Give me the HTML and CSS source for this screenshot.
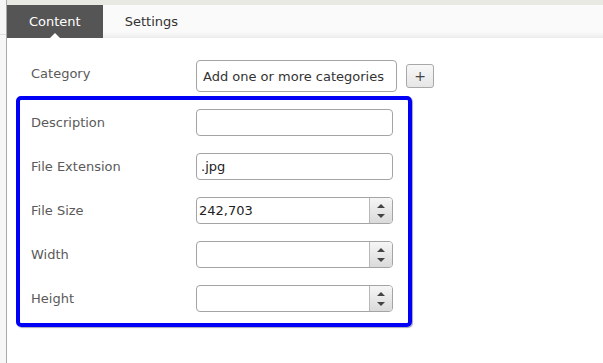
FILE: index.html
```html
<!DOCTYPE html>
<html lang="en">
<head>
    <meta charset="UTF-8">
    <meta name="viewport" content="width=device-width, initial-scale=1.0">
    <title>Media Properties</title>
    <link rel="stylesheet" href="styles.css">
</head>
<body>
    <div class="page">
        <aside class="rail">
            <div class="rail-line"></div>
        </aside>

        <main class="panel">
            <div class="top-stripe"></div>

            <nav class="tabs">
                <a class="tab active" href="#">Content</a>
                <a class="tab" href="#">Settings</a>
            </nav>

            <form class="form">
                <div class="row category-row">
                    <label class="label">Category</label>
                    <div class="field-group">
                        <input class="input category-input" type="text" placeholder="Add one or more categories">
                        <button class="add-btn" type="button">+</button>
                    </div>
                </div>

                <div class="highlight">
                    <div class="row">
                        <label class="label">Description</label>
                        <input class="input" type="text">
                    </div>
                    <div class="row">
                        <label class="label">File Extension</label>
                        <input class="input" type="text" value=".jpg">
                    </div>
                    <div class="row">
                        <label class="label">File Size</label>
                        <div class="input spin">
                            <input type="text" value="242,703">
                            <span class="spinner"><i class="up"></i><i class="down"></i></span>
                        </div>
                    </div>
                    <div class="row">
                        <label class="label">Width</label>
                        <div class="input spin">
                            <input type="text">
                            <span class="spinner"><i class="up"></i><i class="down"></i></span>
                        </div>
                    </div>
                    <div class="row">
                        <label class="label">Height</label>
                        <div class="input spin">
                            <input type="text">
                            <span class="spinner"><i class="up"></i><i class="down"></i></span>
                        </div>
                    </div>
                </div>
            </form>
        </main>
    </div>
</body>
</html>
```

FILE: styles.css
```css
* {
    margin: 0;
    padding: 0;
    box-sizing: border-box;
}

body {
    font-family: "DejaVu Sans", Verdana, sans-serif;
    font-size: 13px;
    color: #333;
    background: #fff;
}

.page {
    display: flex;
    min-height: 363px;
}

/* left strip */
.rail {
    width: 7px;
    flex-shrink: 0;
    background: #f6f6f6;
    border-right: 1px solid #a9a9a9;
}

.rail-line {
    margin-top: 34px;
    border-top: 1px solid #dedede;
}

.panel {
    flex: 1;
    display: flex;
    flex-direction: column;
}

.top-stripe {
    height: 5px;
    background: #e9e9e3;
}

/* tabs */
.tabs {
    display: flex;
    height: 33px;
    background: linear-gradient(to bottom, #fafafa 0, #fafafa 27px, #ececec 33px);
}

.tab {
    position: relative;
    display: flex;
    align-items: center;
    padding: 0 22px;
    color: #333;
    text-decoration: none;
}

.tab.active {
    background: #555;
    color: #fff;
}

.tab.active::after {
    content: '';
    position: absolute;
    left: 50%;
    bottom: 0;
    margin-left: -5px;
    border-left: 5px solid transparent;
    border-right: 5px solid transparent;
    border-bottom: 5px solid #fff;
}

/* form */
.form {
    padding: 22px 0 0 9px;
}

.row {
    display: grid;
    grid-template-columns: 165px auto;
    align-items: center;
    justify-content: start;
}

.label {
    color: #5a5a5a;
}

.category-row {
    padding-left: 15px;
    height: 32px;
}

.category-row .label {
    margin-top: -6px;
}

.field-group {
    display: flex;
    align-items: center;
    gap: 9px;
}

.input {
    width: 197px;
    height: 27px;
    border: 1px solid #a4a4a4;
    border-radius: 4px;
    background: #fff;
    font: inherit;
    color: #222;
    padding: 0 4px;
    outline: none;
}

.category-input {
    width: 201px;
    height: 32px;
    padding: 0 6px;
}

.category-input::placeholder {
    color: #333;
}

.add-btn {
    width: 28px;
    height: 24px;
    border: 1px solid #a8a8a8;
    border-radius: 3px;
    background: linear-gradient(to bottom, #f8f8f8, #e6e6e6);
    font: inherit;
    font-size: 14px;
    color: #444;
    cursor: pointer;
}

.highlight {
    width: 396px;
    margin-top: 4px;
    border: 4px solid #0000f6;
    border-radius: 5px;
    padding: 9px 0 11px 11px;
    display: flex;
    flex-direction: column;
    gap: 17px;
    box-shadow: 1px 1px 1px rgba(0, 0, 60, 0.35);
}

/* number field with spinner */
.spin {
    display: flex;
    padding: 0;
    overflow: hidden;
}

.spin input {
    flex: 1;
    min-width: 0;
    border: none;
    outline: none;
    font: inherit;
    color: #222;
    padding: 0 2px;
    background: transparent;
}

.spinner {
    width: 23px;
    border-left: 1px solid #b8b8b8;
    background: linear-gradient(to bottom, #f6f6f6, #dadada);
    display: flex;
    flex-direction: column;
    align-items: center;
    justify-content: center;
    gap: 6px;
}

.spinner i {
    display: block;
    border-left: 4px solid transparent;
    border-right: 4px solid transparent;
}

.spinner .up {
    border-bottom: 4px solid #444;
}

.spinner .down {
    border-top: 4px solid #444;
}
```
